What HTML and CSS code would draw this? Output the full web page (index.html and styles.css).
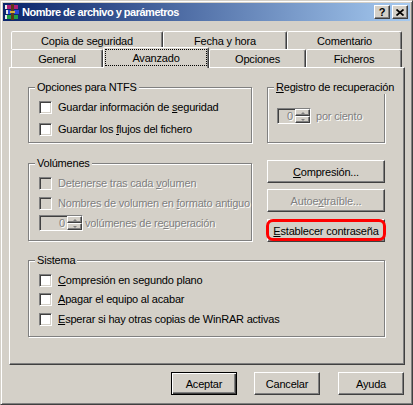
FILE: index.html
```html
<!DOCTYPE html>
<html lang="es">
<head>
<meta charset="utf-8">
<title>Nombre de archivo y parámetros</title>
<link rel="stylesheet" href="styles.css">
</head>
<body>
<div class="window">
  <div class="titlebar">
    <svg class="appicon" width="16" height="16" viewBox="0 0 16 16">
      <rect x="1" y="1" width="13" height="4" fill="#b0207a"/>
      <rect x="1" y="1" width="2" height="4" fill="#e8e8e8"/>
      <rect x="2" y="6" width="13" height="4" fill="#2848d8"/>
      <rect x="2" y="6" width="2" height="4" fill="#e8e8e8"/>
      <rect x="1" y="11" width="13" height="4" fill="#20a048"/>
      <rect x="1" y="11" width="2" height="4" fill="#e8e8e8"/>
      <rect x="7" y="0" width="3" height="16" fill="#5a3a18"/>
      <rect x="6" y="7" width="5" height="2" fill="#d8b040"/>
    </svg>
    <span class="title">Nombre de archivo y parámetros</span>
    <div class="capbtns">
      <span class="capbtn">?</span>
      <span class="capbtn"><svg width="8" height="7" viewBox="0 0 8 7"><path d="M0.5 0.5L7.5 6.5M7.5 0.5L0.5 6.5" stroke="#000" stroke-width="1.7"/></svg></span>
    </div>
  </div>

  <div class="tabs">
    <div class="tabrow">
      <div class="tab t-copia">Copia de seguridad</div>
      <div class="tab t-fecha">Fecha y hora</div>
      <div class="tab t-coment">Comentario</div>
    </div>
    <div class="tabrow front">
      <div class="tab t-general">General</div>
      <div class="tab sel t-avanz"><span class="focus">Avanzado</span></div>
      <div class="tab t-opc">Opciones</div>
      <div class="tab t-fich">Ficheros</div>
    </div>
  </div>

  <div class="panel">
    <div class="row">
      <div class="group g-ntfs">
        <div class="legend">Opciones para NTFS</div>
        <div class="check c1"><span class="cb"></span><span class="lbl">Guardar información de <u>s</u>eguridad</span></div>
        <div class="check c2"><span class="cb"></span><span class="lbl">Guardar los <u>f</u>lujos del fichero</span></div>
      </div>
      <div class="group g-reg">
        <div class="legend"><u>R</u>egistro de recuperación</div>
        <div class="spinrow reg dis">
          <div class="spin s-reg"><span class="spinval">0</span><span class="arrows"><span class="arr"><i class="up"></i></span><span class="arr"><i class="down"></i></span></span></div>
          <span class="lbl">por ciento</span>
        </div>
      </div>
    </div>

    <div class="row">
      <div class="group g-vol">
        <div class="legend">Volúmenes</div>
        <div class="check c1 dis"><span class="cb"></span><span class="lbl">Detenerse tras cada <u>v</u>olumen</span></div>
        <div class="check c1 dis"><span class="cb"></span><span class="lbl">Nombres de volumen en <u>f</u>ormato antiguo</span></div>
        <div class="spinrow vol dis">
          <div class="spin s-vol"><span class="spinval">0</span><span class="arrows"><span class="arr"><i class="up"></i></span><span class="arr"><i class="down"></i></span></span></div>
          <span class="lbl">volúmenes de re<u>c</u>uperación</span>
        </div>
      </div>
      <div class="btncol">
        <div class="btn"><span><u>C</u>ompresión...</span></div>
        <div class="btn b2 dis"><span>Autoe<u>x</u>traíble...</span></div>
        <div class="btn b3 hl"><span><u>E</u>stablecer contraseña</span></div>
      </div>
    </div>

    <div class="group g-sis">
      <div class="legend">Sistema</div>
      <div class="check c1"><span class="cb"></span><span class="lbl"><u>C</u>ompresión en segundo plano</span></div>
      <div class="check c3"><span class="cb"></span><span class="lbl"><u>A</u>pagar el equipo al acabar</span></div>
      <div class="check c1"><span class="cb"></span><span class="lbl"><u>E</u>sperar si hay otras copias de WinRAR activas</span></div>
    </div>
  </div>

  <div class="dlg">
    <div class="btn dbtn def">Aceptar</div>
    <div class="btn dbtn">Cancelar</div>
    <div class="btn dbtn last">Ayuda</div>
  </div>
</div>
</body>
</html>
```

FILE: styles.css
```css
* { box-sizing: border-box; }
html, body { margin: 0; padding: 0; background: #d4d0c8; }
body {
  font-family: "Liberation Sans", Arial, sans-serif;
  font-size: 11px;
  letter-spacing: -0.2px;
  color: #000;
  width: 413px;
  height: 405px;
  overflow: hidden;
}
u { text-decoration: underline; text-underline-offset: 1px; }

.window {
  width: 413px;
  height: 405px;
  border: 1px solid;
  border-color: #d4d0c8 #404040 #404040 #d4d0c8;
  box-shadow: inset 1px 1px 0 #fff, inset -1px -1px 0 #808080;
  padding: 2px;
  background: #d4d0c8;
}

.titlebar {
  height: 18px;
  display: flex;
  align-items: center;
  background: linear-gradient(to right, #0a246a, #a6caf0);
  padding: 0 2px 0 1px;
  color: #fff;
}
.appicon { flex: none; margin-right: 2px; }
.title { flex: 1; font-weight: bold; letter-spacing: -0.5px; white-space: nowrap; line-height: 18px; }
.capbtns { display: flex; gap: 2px; }
.capbtn {
  width: 16px;
  height: 14px;
  background: #d4d0c8;
  border: 1px solid;
  border-color: #fff #404040 #404040 #fff;
  box-shadow: inset -1px -1px 0 #808080;
  display: flex;
  align-items: center;
  justify-content: center;
  color: #000;
  font-weight: bold;
  font-size: 11px;
  line-height: 1;
}

.tabs { margin-top: 10px; padding-left: 8px; }
.tabrow { display: flex; height: 18px; }
.tabrow.front { align-items: flex-end; }
.tab {
  height: 18px;
  flex: none;
  border: 1px solid;
  border-bottom: none;
  border-color: #fff #404040 transparent #fff;
  border-radius: 2px 2px 0 0;
  box-shadow: inset -1px 0 0 #808080;
  background: #d4d0c8;
  display: flex;
  align-items: center;
  justify-content: center;
  white-space: nowrap;
}
.t-copia { width: 152px; }
.t-fecha { width: 124px; }
.t-coment { width: 115px; }
.t-general { width: 92px; }
.t-avanz { width: 106px; }
.t-opc { width: 97px; }
.t-fich { width: 96px; }
.tab.sel {
  height: 21px;
  margin-bottom: -1px;
  position: relative;
  z-index: 2;
  align-items: flex-start;
  padding: 1px 1px 0;
}
.focus {
  width: 100%;
  height: 17px;
  border: 1px dotted #000;
  display: flex;
  align-items: center;
  justify-content: center;
}

.panel {
  margin-left: 6px;
  width: 396px;
  height: 298px;
  border: 1px solid;
  border-color: #fff #404040 #404040 #fff;
  box-shadow: inset -1px -1px 0 #808080;
  padding: 19px 19px 0 18px;
}
.row { display: flex; gap: 15px; align-items: flex-start; }

.group {
  border: 1px solid #808080;
  box-shadow: inset 1px 1px 0 #fff, 1px 1px 0 #fff;
  padding: 0 8px 0 10px;
  flex: none;
}
.legend {
  display: table;
  background: #d4d0c8;
  padding: 0 2px;
  margin: -7px 0 0 -4px;
  height: 13px;
  line-height: 13px;
  white-space: nowrap;
}
.g-ntfs { width: 224px; height: 56px; }
.g-reg { width: 118px; height: 56px; }
.g-vol { width: 224px; height: 78px; margin-top: 20px; }
.g-sis { width: 357px; height: 77px; margin-top: 18px; }

.check {
  display: flex;
  align-items: center;
  height: 13px;
  line-height: 13px;
  white-space: nowrap;
}
.check.c1 { margin-top: 7px; }
.check.c2 { margin-top: 9px; }
.check.c3 { margin-top: 6px; }
.cb {
  width: 13px;
  height: 13px;
  flex: none;
  border: 1px solid;
  border-color: #808080 #fff #fff #808080;
  box-shadow: inset 1px 1px 0 #404040, inset -1px -1px 0 #d4d0c8;
  background: #fff;
  margin-right: 6px;
}
.lbl { white-space: nowrap; }
.dis { color: #808080; text-shadow: 1px 1px 0 #fff; }
.dis .cb { background: #d4d0c8; }

.spinrow { display: flex; align-items: center; white-space: nowrap; }
.spinrow.reg { margin-top: 14px; margin-left: -1px; gap: 5px; }
.spinrow.vol { margin-top: 5px; gap: 2px; }
.spin {
  display: flex;
  flex: none;
  height: 16px;
  border: 1px solid;
  border-color: #808080 #fff #fff #808080;
  box-shadow: inset 1px 1px 0 #404040;
  background: #d4d0c8;
}
.s-reg { width: 34px; }
.s-vol { width: 44px; }
.spinval { flex: 1; text-align: right; padding-right: 2px; line-height: 14px; }
.arrows { width: 15px; display: flex; flex-direction: column; }
.arr {
  flex: 1;
  border: 1px solid;
  border-color: #fff #404040 #404040 #fff;
  box-shadow: inset -1px -1px 0 #808080;
  display: flex;
  align-items: center;
  justify-content: center;
}
.arr i { width: 0; height: 0; border-left: 2px solid transparent; border-right: 2px solid transparent; }
.arr .up { border-bottom: 2px solid #808080; }
.arr .down { border-top: 2px solid #808080; }

.btncol { width: 118px; margin-top: 17px; display: flex; flex-direction: column; flex: none; }
.btn {
  height: 23px;
  border: 1px solid;
  border-color: #fff #404040 #404040 #fff;
  box-shadow: inset -1px -1px 0 #808080;
  background: #d4d0c8;
  display: flex;
  align-items: center;
  justify-content: center;
  white-space: nowrap;
}
.btn.b2 { margin-top: 6px; }
.btn.b3 { margin-top: 7px; }
.hl { position: relative; }
.hl::after {
  content: "";
  position: absolute;
  left: -2px;
  top: -1px;
  right: -2px;
  bottom: 0;
  border: 3px solid #f00;
  border-radius: 7px;
}

.dlg {
  display: flex;
  justify-content: flex-end;
  gap: 17px;
  margin-top: 7px;
  padding-right: 6px;
}
.dbtn { width: 66px; }
.dbtn.last { margin-left: 1px; }
.btn.def {
  border: 1px solid #000;
  box-shadow: inset 1px 1px 0 #fff, inset -1px -1px 0 #404040, inset -2px -2px 0 #808080;
}
```
